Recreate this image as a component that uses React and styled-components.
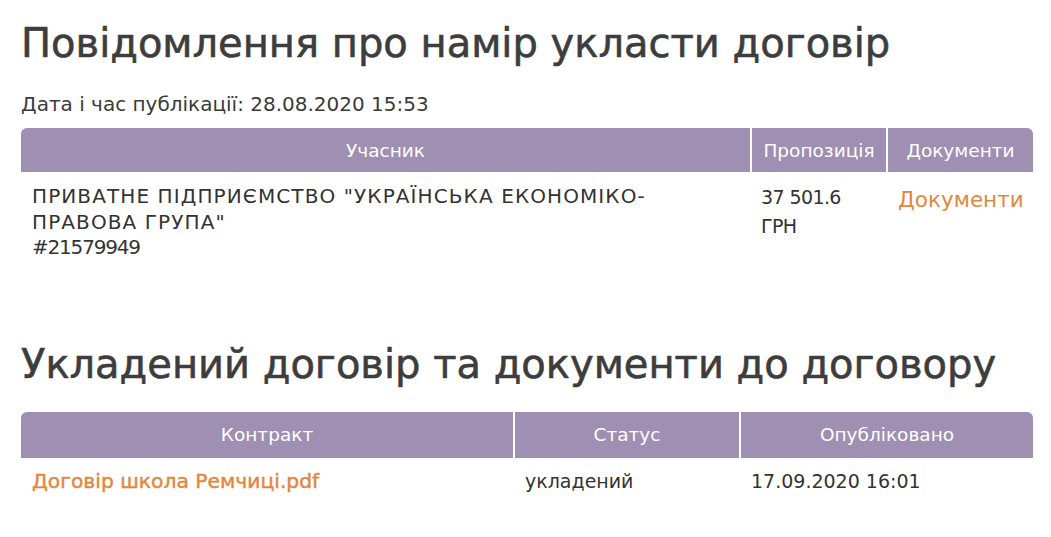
import React from 'react';
import styled, { createGlobalStyle } from 'styled-components';

const GlobalStyle = createGlobalStyle`
  body {
    margin: 0;
    background: #fff;
    font-family: "DejaVu Sans", "Open Sans", sans-serif;
    color: #3a3a3a;
  }
`;

const Page = styled.div`
  padding: 19px 18px 0 21px;
`;

const Heading = styled.h2`
  margin: 0;
  font-size: 40px;
  font-weight: 400;
  line-height: 48px;
  color: #3d3d3d;
  -webkit-text-stroke: 0.6px #3d3d3d;
  margin-top: ${p => p.$top || 0}px;
`;

const Published = styled.div`
  margin-top: 25px;
  font-size: 20px;
  line-height: 24px;
  color: #3a3a3a;
`;

const Table = styled.table`
  width: 1012px;
  border-collapse: separate;
  border-spacing: 0;
  table-layout: fixed;
  margin-top: ${p => p.$top || 0}px;
`;

const Th = styled.th`
  background: #9f8fb2;
  color: #fff;
  font-weight: 400;
  font-size: 18.5px;
  height: ${p => p.$h || 44}px;
  padding: 0;
  text-align: center;
  width: ${p => p.$w}px;
  border-left: 2px solid #fff;
  &:first-child {
    border-left: none;
    border-top-left-radius: 6px;
  }
  &:last-child { border-top-right-radius: 6px; }
`;

const Td = styled.td`
  vertical-align: top;
  padding: ${p => p.$pt || 12}px 6px 0 ${p => p.$pl || 12}px;
  font-size: ${p => p.$size || 20}px;
  line-height: 25.5px;
  color: #333;
`;

const OrgName = styled.span`
  letter-spacing: 1.1px;
`;

const OrgCode = styled.span`
  letter-spacing: -1.2px;
`;

const Amount = styled.div`
  font-size: 19px;
  line-height: 32px;
  letter-spacing: -0.6px;
  margin-top: -3px;
`;

const DocLink = styled.a`
  display: block;
  color: #e0883e;
  text-decoration: none;
  font-size: 21.5px;
  line-height: 26px;
  margin-top: 3px;
`;

const FileLink = styled.a`
  color: #e0883e;
  text-decoration: none;
  font-weight: 400;
  font-size: 20.3px;
  -webkit-text-stroke: 0.45px #e0883e;
`;

export default function App() {
  return (
    <Page>
      <GlobalStyle />
      <Heading>Повідомлення про намір укласти договір</Heading>
      <Published>Дата і час публікації: 28.08.2020 15:53</Published>
      <Table $top={12}>
        <thead>
          <tr>
            <Th $w={729}>Учасник</Th>
            <Th $w={134}>Пропозиція</Th>
            <Th $w={145}>Документи</Th>
          </tr>
        </thead>
        <tbody>
          <tr>
            <Td $pl={11}>
              <OrgName>ПРИВАТНЕ ПІДПРИЄМСТВО "УКРАЇНСЬКА ЕКОНОМІКО-</OrgName><br />
              <OrgName>ПРАВОВА ГРУПА"</OrgName><br />
              <OrgCode>#21579949</OrgCode>
            </Td>
            <Td $pl={11}>
              <Amount>37 501.6</Amount>
              <Amount>ГРН</Amount>
            </Td>
            <Td>
              <DocLink href="#">Документи</DocLink>
            </Td>
          </tr>
        </tbody>
      </Table>
      <Heading $top={79}>Укладений договір та документи до договору</Heading>
      <Table $top={24}>
        <thead>
          <tr>
            <Th $w={492} $h={46}>Контракт</Th>
            <Th $w={224} $h={46}>Статус</Th>
            <Th $w={292} $h={46}>Опубліковано</Th>
          </tr>
        </thead>
        <tbody>
          <tr>
            <Td $pl={11} $pt={11} $size={19}><FileLink href="#">Договір школа Ремчиці.pdf</FileLink></Td>
            <Td $pt={11} $size={19}>укладений</Td>
            <Td $pt={11} $size={19}>17.09.2020 16:01</Td>
          </tr>
        </tbody>
      </Table>
    </Page>
  );
}
